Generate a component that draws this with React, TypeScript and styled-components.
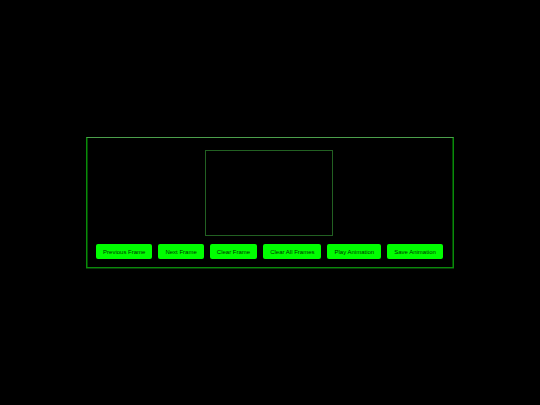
import * as React from 'react'
import styled, { createGlobalStyle } from 'styled-components'

const GlobalStyle = createGlobalStyle`
  * {
    box-sizing: border-box;
  }

  body {
    margin: 0;
    background: #000000;
    font-family: 'Liberation Sans', Arial, sans-serif;
  }
`

const Page = styled.main`
  min-height: 100vh;
  display: flex;
  align-items: center;
  justify-content: center;
`

const Panel = styled.section`
  display: grid;
  justify-items: center;
  gap: 8px;
  padding: 12px 10px 8px 9px;
  border: 1px solid #0a8a0a;
  border-top-color: #4c9f4c;
  box-shadow:
    inset 1px 0 0 #004a00,
    inset -1px 0 0 #004a00,
    0 1px 0 #0a3a0a;
`

const FrameCanvas = styled.canvas`
  display: block;
  width: 128px;
  height: 86px;
  border: 1px solid #226022;
`

const Controls = styled.div`
  display: flex;
  flex-wrap: wrap;
  gap: 6px;
`

const ControlButton = styled.button`
  height: 15px;
  padding: 0 7px;
  border: 0;
  border-radius: 2px;
  background: #00ff00;
  color: #003300;
  font-family: inherit;
  font-size: 6px;
  line-height: 16px;
  cursor: pointer;
`

const actions = [
  'Previous Frame',
  'Next Frame',
  'Clear Frame',
  'Clear All Frames',
  'Play Animation',
  'Save Animation',
]

const App: React.FC = () => {
  return (
    <>
      <GlobalStyle />
      <Page>
        <Panel>
          <FrameCanvas aria-label="Animation frame" />
          <Controls>
            {actions.map((action) => (
              <ControlButton key={action} type="button">
                {action}
              </ControlButton>
            ))}
          </Controls>
        </Panel>
      </Page>
    </>
  )
}

export default App
